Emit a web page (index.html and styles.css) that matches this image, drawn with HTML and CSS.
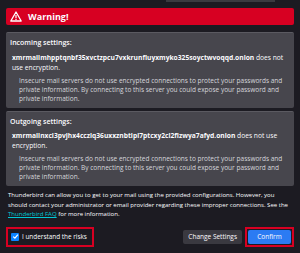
FILE: index.html
```html
<!DOCTYPE html>
<html lang="en">
<head>
    <meta charset="UTF-8">
    <title>Warning</title>
    <link rel="stylesheet" href="styles.css">
</head>
<body>
    <div class="dialog">
        <div class="top-edge"></div>

        <div class="banner">
            <svg class="warn-icon" width="12" height="11" viewBox="0 0 12 11">
                <path d="M6 1 L11.2 10 L0.8 10 Z" fill="none" stroke="#fff" stroke-width="1.3" stroke-linejoin="round"/>
                <rect x="5.4" y="4" width="1.2" height="3.3" fill="#fff"/>
                <rect x="5.4" y="8" width="1.2" height="1.1" fill="#fff"/>
            </svg>
            <span>Warning!</span>
        </div>

        <div class="box">
            <div class="box-title">Incoming settings:</div>
            <div class="host"><b>xmrmailmhpptqnbf35xvctzpcu7vxkrunfluyxmyko325soyctwvoqqd.onion</b> does not use encryption.</div>
            <div class="note">Insecure mail servers do not use encrypted connections to protect your passwords and private information. By connecting to this server you could expose your password and private information.</div>
        </div>

        <div class="box">
            <div class="box-title">Outgoing settings:</div>
            <div class="host"><b>xmrmailnxci3pvjhx4cczlq36uxxznbtlpl7ptcxy2cl2fizwya7afyd.onion</b> does not use encryption.</div>
            <div class="note">Insecure mail servers do not use encrypted connections to protect your passwords and private information. By connecting to this server you could expose your password and private information.</div>
        </div>

        <p class="info">Thunderbird can allow you to get to your mail using the provided configurations. However, you should contact your administrator or email provider regarding these improper connections. See the <a href="#">Thunderbird FAQ</a> for more information.</p>

        <div class="footer">
            <label class="risk outlined">
                <span class="check">
                    <svg width="7" height="7" viewBox="0 0 7 7"><path d="M1.2 3.6 L2.9 5.2 L5.9 1.6" fill="none" stroke="#fff" stroke-width="1.2"/></svg>
                </span>
                I understand the risks
            </label>
            <div class="actions">
                <button class="btn btn-plain">Change Settings</button>
                <span class="outlined btn-wrap"><button class="btn btn-primary">Confirm</button></span>
            </div>
        </div>
    </div>
</body>
</html>
```

FILE: styles.css
```css
body {
    margin: 0;
    background-color: #1c1b22;
    color: #fbfbfe;
    font-family: "Open Sans", "Noto Sans", sans-serif;
    font-size: 6.5px;
}

.dialog {
    padding: 0 6px 0 6px;
}

.top-edge {
    height: 2px;
    margin-left: 160px;
    width: 109px;
    background-color: #3a3a40;
}

.banner {
    display: flex;
    align-items: center;
    gap: 6px;
    height: 17px;
    margin-top: 6px;
    padding: 0 4px;
    background-color: #d70022;
    border-radius: 2px;
    font-size: 9px;
    font-weight: bold;
}

.warn-icon {
    display: block;
}

.box {
    margin-top: 7px;
    padding: 5px 6px 5px 4px;
    background-color: #47464d;
    border-top: 1px solid #5b5a61;
    border-radius: 2px;
    line-height: 9.5px;
}

.box + .box {
    margin-top: 3px;
}

.box-title {
    font-size: 7px;
    font-weight: 600;
    margin-bottom: 5px;
}

.host {
    padding-left: 2px;
    margin-bottom: 3px;
    font-size: 6.7px;
    line-height: 10px;
}

.host b {
    font-weight: 700;
}

.note {
    padding-left: 9px;
    color: #d6d6dc;
    line-height: 9px;
}

.info {
    margin: 5px 0 0 2px;
    font-size: 6.05px;
    line-height: 9.5px;
}

.info a {
    color: #00c8d7;
}

.footer {
    display: flex;
    justify-content: space-between;
    align-items: center;
    margin-top: 7px;
}

.outlined {
    border: 2px solid #d70022;
}

.risk {
    display: flex;
    align-items: center;
    gap: 3px;
    height: 16px;
    padding: 0 5px 0 3px;
    font-size: 6.4px;
}

.check {
    display: flex;
    align-items: center;
    justify-content: center;
    width: 8px;
    height: 8px;
    background-color: #0a84ff;
    border-radius: 1px;
}

.actions {
    display: flex;
    align-items: center;
    gap: 3px;
}

.btn-wrap {
    display: block;
    padding: 1px;
}

.btn {
    display: block;
    font-family: "Open Sans", sans-serif;
    font-size: 6.5px;
    color: #fbfbfe;
    border: none;
    border-radius: 2px;
    height: 14px;
    padding: 0 5px;
}

.btn-plain {
    background-color: #3a3940;
}

.btn-primary {
    background-color: #2b7bf3;
    width: 43px;
}
```
